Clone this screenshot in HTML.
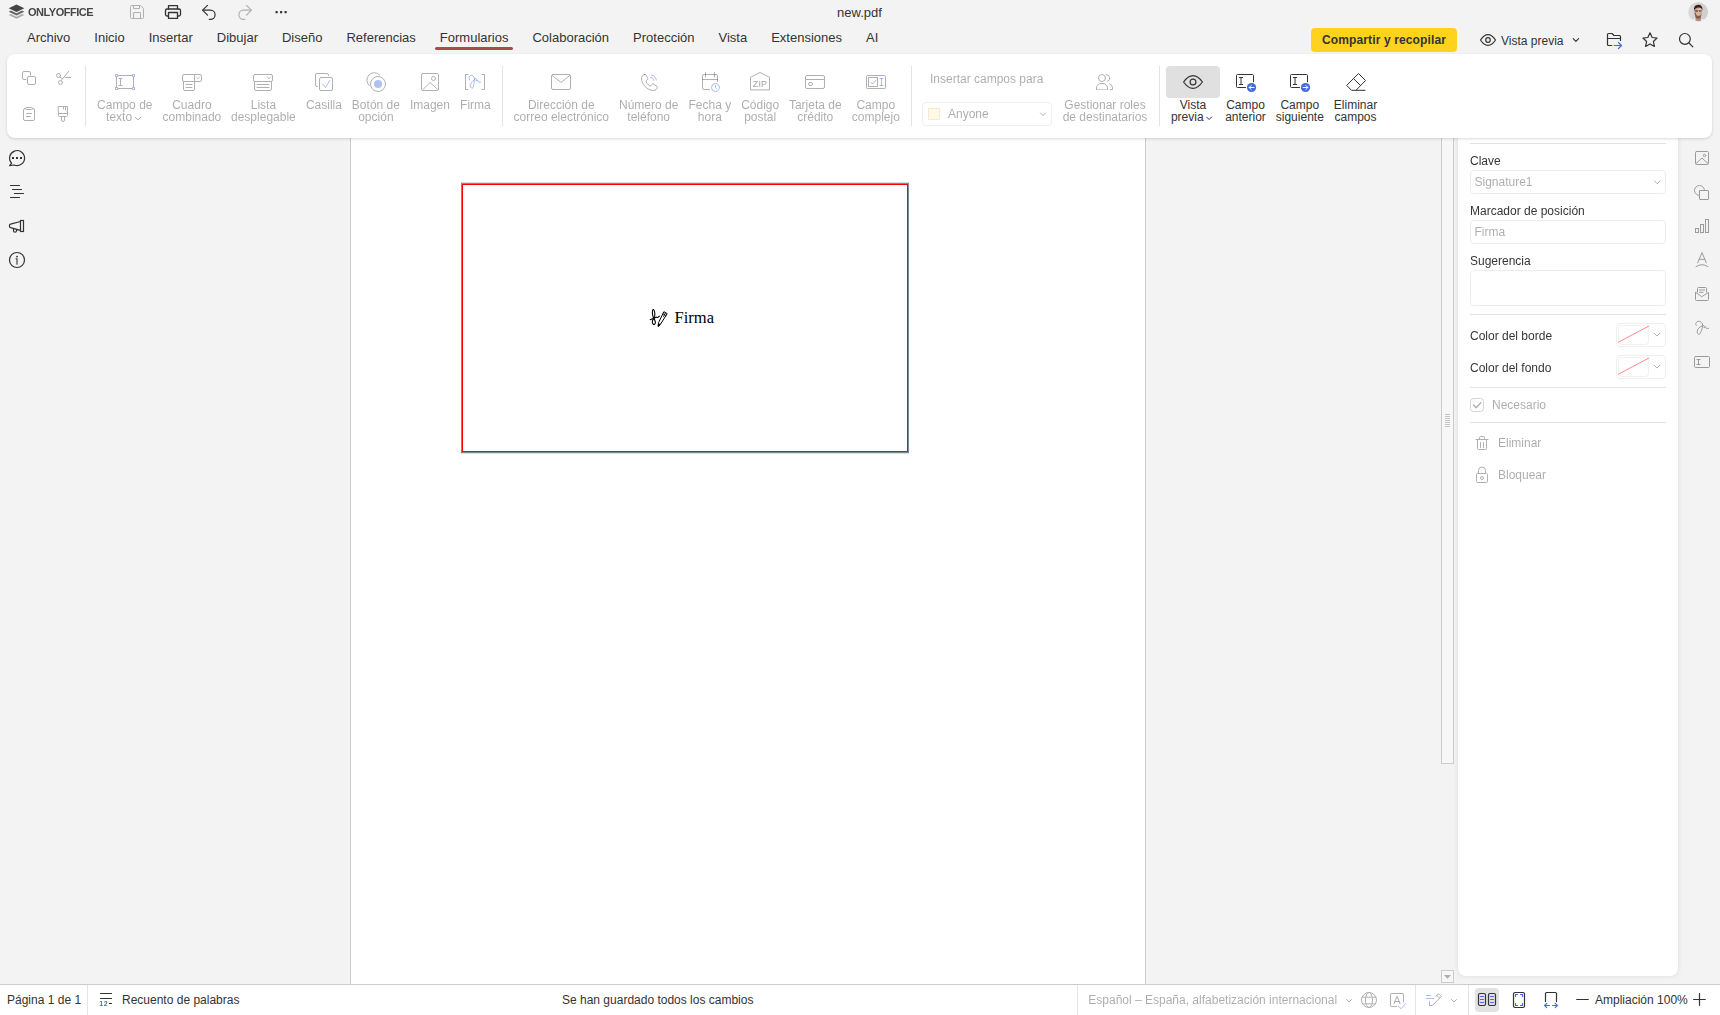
<!DOCTYPE html>
<html lang="es">
<head>
<meta charset="utf-8">
<title>new.pdf</title>
<style>
*{box-sizing:border-box;margin:0;padding:0}
html,body{width:1720px;height:1015px;overflow:hidden}
body{background:#f3f3f3;font-family:"Liberation Sans",Arial,sans-serif;font-size:12px;color:#333;position:relative}
.abs{position:absolute}
.t,.lbl,.cap,.st,.tab,#share,#tabs{z-index:3}
#ico{z-index:2}
#ico rect:not([rx]){stroke-linejoin:miter}
.t{position:absolute;white-space:nowrap;line-height:14px}
.c{text-align:center;transform:translateX(-50%)}
svg{position:absolute;overflow:visible}
/* title bar */
#title{left:0;top:0;width:1720px;height:24px}
/* tabs */
#tabs{left:15px;top:30px;display:flex;font-size:13px;line-height:16px;color:#333;white-space:nowrap}
#tabs span{padding:0 12px}
#underline{left:435px;top:47px;width:78px;height:3px;background:#a94a4b;border-radius:1.5px}
#share{left:1311px;top:28px;width:146px;height:24px;border-radius:4px;background:#ffd21e;font-weight:bold;color:#333;text-align:center;line-height:24px;font-size:12px;letter-spacing:.13px}
/* toolbar */
#toolbar{left:7px;top:54px;width:1705px;height:84px;background:#fff;border-radius:8px;box-shadow:0 1px 3px rgba(0,0,0,.15)}
.sep{position:absolute;width:1px;background:#e3e3e3;top:66px;height:60px}
.cap{position:absolute;white-space:nowrap;line-height:12px;font-size:12px;text-align:center;transform:translateX(-50%);color:#333;opacity:.4;top:99px}
.cap.on{opacity:1}
/* doc */
#page{left:350px;top:100px;width:796px;height:885px;background:#fff;border-left:1px solid #cbcbcb;border-right:1px solid #cbcbcb}
#sig{left:461px;top:183px;width:448px;height:270px;border:1px solid #7f8c8d}
#sig i{position:absolute;left:0;top:0;right:0;bottom:0;border:1px solid #f00;display:block}
#thumb{left:1441px;top:100px;width:13px;height:664px;background:#f7f7f7;border:1px solid #cbcbcb}
/* right panel */
#rpanel{left:1458px;top:100px;width:220px;height:876px;background:#fff;border-radius:8px;box-shadow:0 0 5px rgba(0,0,0,.11)}
.hr{position:absolute;left:1470px;width:196px;height:1px;background:#e3e3e3}
.lbl{opacity:.99;position:absolute;left:1470px;white-space:nowrap;line-height:14px;color:#333}
.inp{position:absolute;left:1470px;width:196px;height:24px;border:1px solid #ececec;border-radius:4px;opacity:.99;background:#fff;color:rgba(51,51,51,.4);line-height:22px;padding-left:3.5px}
/* status */
#status{left:0;top:984px;width:1720px;height:31px;background:#fff;border-top:1px solid #cbcbcb}
.st{position:absolute;top:993px;white-space:nowrap;line-height:14px;color:#333}
.dis{color:#333;opacity:.4}
</style>
</head>
<body>

<!-- ===== document area ===== -->
<div class="abs" id="page"></div>
<div class="abs" id="sig"><i></i></div>
<div class="abs" style="left:461px;top:182px;width:448px;height:272px;border-top:1px solid rgba(127,140,141,.28);border-bottom:1px solid rgba(127,140,141,.28)"></div>
<span class="t" style="left:674.6px;top:309px;font-family:'Liberation Serif',serif;font-size:16.5px;line-height:18px;color:#000">Firma</span>
<div class="abs" id="thumb"></div>

<!-- ===== right panel ===== -->
<div class="abs" id="rpanel"></div>
<div class="hr" style="top:143px"></div>
<span class="lbl" style="top:154px">Clave</span>
<div class="inp" style="top:170px">Signature1</div>
<span class="lbl" style="top:204px">Marcador de posición</span>
<div class="inp" style="top:220px">Firma</div>
<span class="lbl" style="top:254px">Sugerencia</span>
<div class="inp" style="top:270px;height:36px"></div>
<div class="hr" style="top:314px"></div>
<span class="lbl" style="top:329px">Color del borde</span>
<span class="lbl" style="top:361px">Color del fondo</span>
<div class="hr" style="top:387px"></div>
<span class="lbl dis" style="left:1492px;top:398px">Necesario</span>
<div class="hr" style="top:422px"></div>
<span class="lbl dis" style="left:1498px;top:436px">Eliminar</span>
<span class="lbl dis" style="left:1498px;top:468px">Bloquear</span>

<!-- ===== status bar ===== -->
<div class="abs" id="status"></div>
<span class="st" style="left:7px">Página 1 de 1</span>
<span class="st" style="left:122px">Recuento de palabras</span>
<span class="st" style="left:562px">Se han guardado todos los cambios</span>
<span class="st dis" style="left:1088.3px">Español – España, alfabetización internacional</span>
<span class="st" style="left:1595px">Ampliación 100%</span>

<!-- ===== title bar ===== -->
<span class="t" style="left:28px;top:5px;font-weight:bold;font-size:11px;color:#444;letter-spacing:-.48px;opacity:.99">ONLYOFFICE</span>
<span class="t c" style="left:859.5px;top:5px;font-size:13px;line-height:16px">new.pdf</span>

<!-- ===== tabs ===== -->
<div class="abs" id="tabs"><span>Archivo</span><span>Inicio</span><span>Insertar</span><span>Dibujar</span><span>Diseño</span><span>Referencias</span><span>Formularios</span><span>Colaboración</span><span>Protección</span><span>Vista</span><span>Extensiones</span><span>AI</span></div>
<div class="abs" id="underline"></div>
<div class="abs" id="share">Compartir y recopilar</div>
<span class="t" style="left:1501px;top:34px">Vista previa</span>

<!-- ===== toolbar ===== -->
<div class="abs" id="toolbar"></div>
<div class="sep" style="left:85px"></div>
<div class="sep" style="left:502px"></div>
<div class="sep" style="left:911px"></div>
<div class="sep" style="left:1159px"></div>

<span class="cap" style="left:124.8px">Campo de</span><span class="cap" style="left:106.1px;top:111px;transform:none">texto</span>
<span class="cap" style="left:191.9px">Cuadro<br>combinado</span>
<span class="cap" style="left:263.4px">Lista<br>desplegable</span>
<span class="cap" style="left:323.9px">Casilla</span>
<span class="cap" style="left:375.9px">Botón de<br>opción</span>
<span class="cap" style="left:429.9px">Imagen</span>
<span class="cap" style="left:475.4px">Firma</span>
<span class="cap" style="left:561.3px">Dirección de<br>correo electrónico</span>
<span class="cap" style="left:648.7px">Número de<br>teléfono</span>
<span class="cap" style="left:709.8px">Fecha y<br>hora</span>
<span class="cap" style="left:760.2px">Código<br>postal</span>
<span class="cap" style="left:815.3px">Tarjeta de<br>crédito</span>
<span class="cap" style="left:875.8px">Campo<br>complejo</span>
<span class="t dis" style="left:930px;top:72px">Insertar campos para</span>
<span class="t dis" style="left:948px;top:107px">Anyone</span>
<span class="cap" style="left:1105px">Gestionar roles<br>de destinatarios</span>
<span class="cap on" style="left:1193px">Vista</span><span class="cap on" style="left:1170.9px;top:111px;transform:none">previa</span>
<span class="cap on" style="left:1245.5px">Campo<br>anterior</span>
<span class="cap on" style="left:1299.8px">Campo<br>siguiente</span>
<span class="cap on" style="left:1355.5px">Eliminar<br>campos</span>


<!-- ===== icon overlay ===== -->
<svg id="ico" width="1720" height="1015" viewBox="0 0 1720 1015" style="left:0;top:0;pointer-events:none" fill="none" stroke-linecap="round" stroke-linejoin="round">
<!-- logo -->
<g stroke="none">
 <path d="M16.5 4.6 L24.3 8.3 L16.5 12 L8.7 8.3 Z" fill="#444"/>
 <path d="M10.9 10.6 L8.7 11.7 L16.5 15.4 L24.3 11.7 L22.1 10.6 L16.5 13.3 Z" fill="#666"/>
 <path d="M10.9 14 L8.7 15.1 L16.5 18.8 L24.3 15.1 L22.1 14 L16.5 16.7 Z" fill="#aaa"/>
</g>
<!-- save (disabled) -->
<g stroke="#444" stroke-width="1" opacity=".38">
 <path d="M131.5 5.5 H140.5 L143.5 8.5 V17.5 a1 1 0 0 1 -1 1 H131.5 a1 1 0 0 1 -1 -1 V6.5 a1 1 0 0 1 1 -1 Z"/>
 <path d="M133.5 5.5 V8.5 H139.5 V5.5"/>
 <path d="M133.5 18.5 V12.5 H140.5 V18.5"/>
</g>
<!-- print -->
<g stroke="#333" stroke-width="1.3">
 <path d="M168.5 9 V5.6 H177.5 V9"/>
 <path d="M168.5 16 H167 a1.5 1.5 0 0 1 -1.5 -1.5 V10.5 a1.5 1.5 0 0 1 1.5 -1.5 H179 a1.5 1.5 0 0 1 1.5 1.5 V14.5 a1.5 1.5 0 0 1 -1.5 1.5 H177.5"/>
 <path d="M168.5 12.5 H177.5 V18.4 H168.5 Z"/>
</g>
<!-- undo -->
<g stroke="#333" stroke-width="1.2">
 <path d="M207.5 5.3 L202.6 10.2 L207.5 15.1"/>
 <path d="M203 10.2 H210.5 a4.6 4.6 0 0 1 0 9.2 H209.3"/>
</g>
<!-- redo (disabled) -->
<g stroke="#444" stroke-width="1.2" opacity=".38">
 <path d="M246.5 5.3 L251.4 10.2 L246.5 15.1"/>
 <path d="M251 10.2 H243.5 a4.6 4.6 0 0 0 0 9.2 H244.7"/>
</g>
<!-- more -->
<g fill="#333" stroke="none">
 <rect x="275.5" y="11" width="2.2" height="2.2" rx=".5"/><rect x="280" y="11" width="2.2" height="2.2" rx=".5"/><rect x="284.5" y="11" width="2.2" height="2.2" rx=".5"/>
</g>
<!-- avatar -->
<g stroke="none">
 <defs>
  <clipPath id="av"><ellipse cx="1698.100" cy="12" rx="10" ry="9.700"/></clipPath>
  <filter id="bl" x="-20%" y="-20%" width="140%" height="140%"><feGaussianBlur stdDeviation=".55"/></filter>
  <linearGradient id="sk" x1="0" y1="0" x2="1" y2="1"><stop offset="0" stop-color="#a87a66"/><stop offset=".45" stop-color="#e6c0aa"/><stop offset="1" stop-color="#b78d7a"/></linearGradient>
  <linearGradient id="abg" x1="0" y1="0" x2="1" y2="0"><stop offset="0" stop-color="#dadada"/><stop offset="1" stop-color="#cdcdcd"/></linearGradient>
 </defs>
 <ellipse cx="1698.100" cy="12" rx="10" ry="9.700" fill="url(#abg)"/>
 <g clip-path="url(#av)"><g filter="url(#bl)">
  <ellipse cx="1698" cy="22.300" rx="7.500" ry="3.800" fill="#f4f4f4"/>
  <path d="M1696 15 H1700.800 L1701.300 20.500 Q1698.500 22 1695.300 20.500 Z" fill="#b88c79"/>
  <ellipse cx="1698.200" cy="12" rx="3.900" ry="5.300" fill="url(#sk)"/>
  <path d="M1694.500 13 Q1694.800 18.900 1698.300 18.700 Q1701 18.500 1701.600 14.500 Q1699.500 16.300 1698 16 Q1696 15.500 1695.800 12.500 Z" fill="#5f3e33" opacity=".7"/>
  <ellipse cx="1696.600" cy="11.200" rx="1.500" ry="1" fill="#4a312a" opacity=".6"/><ellipse cx="1700" cy="11.100" rx="1.400" ry=".9" fill="#4a312a" opacity=".5"/>
  <path d="M1694 10.800 Q1693.300 4.700 1698.200 4.700 Q1703 4.700 1702.400 10.500 Q1701.800 8 1700 7.700 Q1697 7.300 1695.600 8.600 Q1694.500 9.500 1694 10.800 Z" fill="#35231f"/>
  <path d="M1694.600 10.600 H1701.800" stroke="#3a2924" stroke-width=".6" opacity=".5"/>
 </g></g>
</g>
<!-- eye (tab bar) -->
<g stroke="#333" stroke-width="1.2">
 <path d="M1480.500 40 Q1484 34.600 1488 34.600 Q1492 34.600 1495.500 40 Q1492 45.400 1488 45.400 Q1484 45.400 1480.500 40 Z"/>
 <circle cx="1488" cy="40" r="2.300"/>
</g>
<path d="M1573.200 38.600 L1575.900 41.300 L1578.600 38.600" stroke="#333" stroke-width="1.100"/>
<!-- folder -->
<g stroke="#333" stroke-width="1.200">
 <path d="M1611.800 45.500 H1608.500 a1 1 0 0 1 -1 -1 V34.500 a1 1 0 0 1 1 -1 H1612 L1614 35.500 H1619.500 a1 1 0 0 1 1 1 V40.500"/>
 <path d="M1607.500 38.500 H1620.500"/>
</g>
<path d="M1614.200 45.500 H1621.500 M1618.500 42.500 L1621.500 45.500 L1618.500 48.500" stroke="#446cd8" stroke-width="1.200"/>
<!-- star -->
<path d="M1650 32.800 L1652.150 37.500 L1657.100 38.050 L1653.400 41.500 L1654.400 46.400 L1650 43.900 L1645.600 46.400 L1646.600 41.500 L1642.900 38.050 L1647.850 37.500 Z" stroke="#333" stroke-width="1.200"/>
<!-- search -->
<g stroke="#333" stroke-width="1.200"><circle cx="1684.900" cy="38.900" r="5.400"/><path d="M1689 43 L1692.800 46.800"/></g>


<!-- copy / cut / paste / painter -->
<g stroke="#444" stroke-width="1" opacity=".42">
 <path d="M26 79.500 H24 a1.500 1.500 0 0 1 -1.500 -1.500 V73 a1.500 1.500 0 0 1 1.500 -1.500 H29 a1.500 1.500 0 0 1 1.500 1.500 V75"/>
 <rect x="27.500" y="76.500" width="8" height="8" rx="1.500"/>
 <circle cx="58.500" cy="75.500" r="2"/><circle cx="60.500" cy="82.500" r="2"/>
 <path d="M68.500 71.500 L61.300 80.500 M60 77 L62.300 78.700 M65.500 77.500 H70.500"/>
 <rect x="23.500" y="108.500" width="11" height="12" rx="1.500"/>
 <rect x="25.500" y="107.500" width="7" height="2" rx="1" fill="#fff"/>
 <path d="M26.500 113.500 H31.500 M26.500 116.500 H30.500"/>
 <path d="M58.500 106.500 H67.500 V115.500 a1 1 0 0 1 -1 1 H59.500 a1 1 0 0 1 -1 -1 Z M58.500 113.500 H67.500 M63.500 106.500 V109 M65.500 106.500 V110"/>
 <path d="M61.500 116.500 V120 a1.500 1.500 0 0 0 3 0 V116.500"/>
</g>
<!-- text field -->
<g stroke="#444" stroke-width="1" opacity=".42"><rect x="116.500" y="75.500" width="17" height="13"/><path d="M120.500 78.500 V85.500 M119 78.500 H122 M119 85.500 H122"/></g>
<g stroke="#a9baec" stroke-width="1" fill="#fff"><rect x="115.500" y="74.500" width="2" height="2"/><rect x="132.500" y="74.500" width="2" height="2"/><rect x="115.500" y="87.500" width="2" height="2"/><rect x="132.500" y="87.500" width="2" height="2"/></g>
<!-- combo box -->
<g stroke="#444" stroke-width="1" opacity=".42"><rect x="182.500" y="74.500" width="19" height="7" rx="1.500"/><path d="M194.500 74.500 V81.500"/>
 <path d="M183.500 81.500 V89 a1.500 1.500 0 0 0 1.500 1.500 H193 a1.500 1.500 0 0 0 1.500 -1.500 V81.500 M186 84.500 H192 M186 87.500 H192"/></g>
<path d="M196.500 77.200 L198 78.700 L199.500 77.200" stroke="#446cd8" stroke-width="1" opacity=".45"/>
<!-- dropdown list -->
<g stroke="#444" stroke-width="1" opacity=".42"><rect x="253.500" y="74.500" width="19" height="7" rx="1.500"/>
 <path d="M254.500 81.500 V89 a1.500 1.500 0 0 0 1.500 1.500 H270 a1.500 1.500 0 0 0 1.500 -1.500 V81.500 M257 84.500 H269 M257 87.500 H269"/>
 <path d="M267.500 77.200 L269 78.700 L270.500 77.200"/></g>
<!-- checkbox -->
<g stroke="#444" stroke-width="1" opacity=".42"><path d="M317.500 86.500 H317 a1.500 1.500 0 0 1 -1.500 -1.500 V75 a1.500 1.500 0 0 1 1.500 -1.500 H327 a1.500 1.500 0 0 1 1.500 1.500 V75.500"/><rect x="319.500" y="77.500" width="13" height="13" rx="1.500"/></g>
<path d="M322.500 84 L325.500 87.500 L329.800 80.300" stroke="#446cd8" stroke-width="1" opacity=".45"/>
<!-- radio -->
<g stroke="#444" stroke-width="1" opacity=".42"><path d="M369.300 85.700 A7.500 7.500 0 1 1 379.700 74.900"/><circle cx="378" cy="84" r="7.500"/></g>
<circle cx="378" cy="84" r="4" fill="#446cd8" opacity=".42" stroke="none"/>
<!-- image -->
<g stroke="#444" stroke-width="1" opacity=".42"><rect x="421.500" y="73.500" width="17" height="17" rx="1.500"/><circle cx="433.500" cy="78.500" r="2"/><path d="M423 89.500 L430 82.500 L437.500 89.200"/></g>
<!-- signature -->
<g stroke="#444" stroke-width="1" opacity=".42"><path d="M468 74.500 H465.500 V89.500 H468 M482 74.500 H484.500 V89.500 H482"/></g>
<path d="M469.65 80.05 C469.56 79.58 468.84 78.01 469.10 77.20 C469.36 76.39 470.45 75.33 471.20 75.20 C471.95 75.07 473.07 75.72 473.60 76.40 C474.13 77.08 474.32 78.22 474.40 79.30 C474.48 80.38 474.28 81.68 474.10 82.90 C473.92 84.12 473.60 85.70 473.30 86.60 C473.00 87.50 472.77 88.22 472.30 88.30 C471.83 88.38 470.82 87.73 470.50 87.10 C470.18 86.47 470.15 85.37 470.40 84.50 C470.65 83.63 471.38 82.68 472.00 81.90 C472.62 81.12 473.43 80.38 474.10 79.80 C474.77 79.22 475.62 78.18 476.00 78.40 C476.38 78.62 476.15 80.82 476.40 81.10 C476.65 81.38 477.14 79.88 477.50 80.05 C477.86 80.22 478.03 81.77 478.55 82.10 C479.07 82.42 480.26 82.02 480.60 82.00" stroke="#446cd8" stroke-width="1" opacity=".45"/>
<!-- email -->
<g stroke="#444" stroke-width="1" opacity=".42"><rect x="551.500" y="74.500" width="19" height="15" rx="1.500"/><path d="M552.300 75.500 L561 82.500 L569.700 75.500"/></g>
<!-- phone -->
<g stroke="#444" stroke-width="1" opacity=".42"><path d="M644.800 74.500 C643 74.500 641.500 76.500 641.500 78.500 C641.500 84.500 647.500 90.500 653.500 90.500 C655.500 90.500 657.300 89 657.300 87.300 C657.300 86.600 656.900 86.200 656.300 85.800 L653.800 84.200 C653 83.700 652.300 83.900 651.800 84.500 L651 85.500 C650.500 86 649.900 86 649.300 85.500 C648 84.500 646.700 83 646.200 82 C645.900 81.400 646 80.900 646.500 80.500 L647.300 79.800 C647.900 79.300 648 78.600 647.600 77.900 L646.200 75.400 C645.900 74.800 645.400 74.500 644.800 74.500 Z"/></g>
<g stroke="#446cd8" stroke-width="1" opacity=".45"><path d="M650.700 77.400 C652.300 77.600 653.500 78.800 653.800 80.400 M651.300 75 C654 75.300 656 77.400 656.300 80"/></g>
<!-- date -->
<g stroke="#444" stroke-width="1" opacity=".42"><path d="M709.500 89.500 H704 a1.500 1.500 0 0 1 -1.500 -1.500 V76 a1.500 1.500 0 0 1 1.500 -1.500 H716 a1.500 1.500 0 0 1 1.500 1.500 V81.500 M702.500 79.500 H717.500 M705.500 72.500 V77 M714.500 72.500 V77"/></g>
<g stroke="#446cd8" stroke-width="1" opacity=".45"><circle cx="715.500" cy="87.500" r="4"/><path d="M715.500 85.200 V87.700 L716.800 89"/></g>
<!-- zip -->
<g stroke="#444" stroke-width="1" opacity=".42"><path d="M750.500 89.500 V77.300 L760 72.500 L769.500 77.300 V89.500 Z" stroke-linejoin="round"/></g>
<text x="760" y="86.600" text-anchor="middle" font-family="Liberation Sans,Arial,sans-serif" font-size="9" fill="#444" opacity=".5" stroke="none" letter-spacing="0.1">ZIP</text>
<!-- credit card -->
<g stroke="#444" stroke-width="1" opacity=".42"><rect x="805.500" y="75.500" width="19" height="13" rx="1.500"/><path d="M805.500 79.500 H824.500"/><rect x="808.500" y="82.500" width="4" height="3" rx="1.500"/></g>
<!-- complex -->
<g stroke="#444" stroke-width="1" opacity=".42"><rect x="866.500" y="75.500" width="19" height="13" rx="1"/><rect x="868.500" y="77.500" width="9" height="9"/></g>
<g stroke="#446cd8" stroke-width="1" opacity=".45"><path d="M870.500 82 L872.500 84 L876 80 M881.500 78.500 V85.500 M880 78.500 H883 M880 85.500 H883"/></g>
<!-- anyone combo -->
<rect x="922.500" y="102.500" width="129" height="23" rx="3.500" stroke="#efefef" fill="#fff"/>
<rect x="928.500" y="108.500" width="11" height="11" fill="#fff8e4" stroke="#f3ead2"/>
<path d="M1040.500 113 L1043 115.500 L1045.500 113" stroke="#444" stroke-width="1" opacity=".42"/>
<!-- users -->
<g stroke="#444" stroke-width="1" opacity=".42"><circle cx="1102" cy="78" r="3.500"/><path d="M1096.500 89.500 V88 a4.500 4.500 0 0 1 4.500 -4.500 H1103 a4.500 4.500 0 0 1 4.500 4.500 V89.500 Z"/>
 <path d="M1106 74.600 A3.500 3.500 0 0 1 1107.400 81.400 M1109.300 83.600 A4.500 4.500 0 0 1 1112.500 88 V89.500 H1110.200"/></g>
<!-- preview (active) -->
<rect x="1166" y="66" width="54" height="32" rx="4" fill="#e0e0e0" stroke="none"/>
<g stroke="#333" stroke-width="1.200"><path d="M1183.600 82 Q1188 75.600 1193 75.600 Q1198 75.600 1202.400 82 Q1198 88.400 1193 88.400 Q1188 88.400 1183.600 82 Z"/><circle cx="1193" cy="82" r="2.900"/></g>
<path d="M1206.700 117.100 L1209.100 119.500 L1211.500 117.100" stroke="#333" stroke-width="1"/>
<path d="M135.200 117.200 L138 119.900 L140.800 117.200" stroke="#444" stroke-width="1" opacity=".42"/>
<!-- prev field -->
<g stroke="#333" stroke-width="1"><path d="M1245.500 87.500 H1237.500 a1 1 0 0 1 -1 -1 V75.500 a1 1 0 0 1 1 -1 H1252.500 a1 1 0 0 1 1 1 V81.800 M1241 77.500 V84.500 M1239.300 77.500 H1242.700 M1239.300 84.500 H1242.700"/></g>
<circle cx="1251.500" cy="87.500" r="4.600" fill="#446cd8" stroke="none"/>
<path d="M1254 87.500 H1249.200 M1251.200 85.500 L1249.200 87.500 L1251.200 89.500" stroke="#fff" stroke-width="1"/>
<!-- next field -->
<g stroke="#333" stroke-width="1"><path d="M1299.500 87.500 H1291.500 a1 1 0 0 1 -1 -1 V75.500 a1 1 0 0 1 1 -1 H1306.500 a1 1 0 0 1 1 1 V81.800 M1295 77.500 V84.500 M1293.300 77.500 H1296.700 M1293.300 84.500 H1296.700"/></g>
<circle cx="1305.500" cy="87.500" r="4.600" fill="#446cd8" stroke="none"/>
<path d="M1303 87.500 H1307.800 M1305.800 85.500 L1307.800 87.500 L1305.800 89.500" stroke="#fff" stroke-width="1"/>
<!-- eraser -->
<g stroke="#333" stroke-width="1" stroke-linejoin="miter"><path d="M1356 90.300 L1365.500 80.500 L1358.500 73.500 L1346.700 85.400 L1351.500 90.300 H1365 M1353.500 78.600 L1360.600 85.600"/></g>


<!-- left sidebar -->
<g stroke="#333" stroke-width="1.200">
 <path d="M11.600 163.200 A7.500 7.500 0 1 1 14.200 165 L9.600 165.700 Z"/>
 <path d="M10.500 185.500 H19.500 M12.500 189.500 H21.500 M14.500 193.500 H23.500 M10.500 197.500 H19.500"/>
 <path d="M20.500 221.500 L10.500 224.200 a1 1 0 0 0 -1 1 V226.600 a1 1 0 0 0 1 1 L20.500 230.300 M13.500 228.600 V230.700 a1.500 1.500 0 0 0 3 0 V229.500"/>
 <rect x="20.500" y="220.500" width="3" height="11"/>
 <circle cx="17" cy="260" r="7.500"/>
 <path d="M16 258.700 H17 V264.300" stroke-width="1.100"/>
</g>
<g fill="#333" stroke="none"><rect x="12" y="157" width="2" height="2"/><rect x="16" y="157" width="2" height="2"/><rect x="20" y="157" width="2" height="2"/><circle cx="17" cy="256.600" r=".9"/></g>
<!-- right strip -->
<g stroke="#444" stroke-width="1" opacity=".5">
 <rect x="1695.500" y="151.500" width="13" height="13" rx="1"/><circle cx="1704.500" cy="155.500" r="1.200"/><path d="M1696.300 163.300 L1702 158 L1707.800 163.300"/>
 <path d="M1699.500 195.500 A5 5 0 1 1 1704.500 190.500"/><rect x="1699.500" y="190.500" width="9" height="9" rx=".5"/>
 <rect x="1695.500" y="228.500" width="3" height="4"/><rect x="1700.500" y="224.500" width="3" height="8"/><rect x="1705.500" y="219.500" width="3" height="13"/>
 <path d="M1697.700 262.800 L1702 252.600 L1706.300 262.800 M1699.200 259.300 H1704.800 M1696 266.600 Q1702 262.600 1708 266.600"/>
 <path d="M1697.500 292 V288.500 a1 1 0 0 1 1 -1 H1705.500 a1 1 0 0 1 1 1 V292 M1695.500 292.500 V299.500 a1 1 0 0 0 1 1 H1707.500 a1 1 0 0 0 1 -1 V292.500 L1702 296.500 Z M1699.500 290 H1704.500 M1699.500 292.300 H1703"/>
 <path d="M1696.30 325.30 C1696.22 324.92 1695.35 323.68 1695.80 323.00 C1696.25 322.32 1697.93 321.12 1699.00 321.20 C1700.07 321.28 1701.62 322.53 1702.20 323.50 C1702.78 324.47 1702.70 325.67 1702.50 327.00 C1702.30 328.33 1701.53 330.27 1701.00 331.50 C1700.47 332.73 1699.92 334.15 1699.30 334.40 C1698.68 334.65 1697.58 333.73 1697.30 333.00 C1697.02 332.27 1697.15 331.00 1697.60 330.00 C1698.05 329.00 1698.97 327.75 1700.00 327.00 C1701.03 326.25 1703.08 325.33 1703.80 325.50 C1704.52 325.67 1704.02 327.83 1704.30 328.00 C1704.58 328.17 1705.13 326.42 1705.50 326.50 C1705.87 326.58 1706.00 328.20 1706.50 328.50 C1707.00 328.80 1708.17 328.33 1708.50 328.30"/>
 <rect x="1694.500" y="356.500" width="15" height="11" rx="1"/><path d="M1698.500 359.500 V364.500 M1697 359.500 H1700 M1697 364.500 H1700"/>
</g>


<!-- right panel widgets -->
<path d="M1654.500 181 L1657.250 183.750 L1660 181" stroke="#444" stroke-width="1" opacity=".42"/>
<g>
 <rect x="1616.500" y="323.500" width="49" height="23" rx="3.500" stroke="#efefef" fill="#fff"/>
 <rect x="1618.500" y="325.500" width="30" height="19" rx="3" stroke="#f0f0f0" fill="#fff"/>
 <path d="M1618.400 342.200 L1648.800 326.100" stroke="#ff8a8a" stroke-width="1"/>
 <path d="M1654.300 333.300 L1657 336 L1659.700 333.300" stroke="#444" stroke-width="1" opacity=".42"/>
 <rect x="1616.500" y="355.500" width="49" height="23" rx="3.500" stroke="#efefef" fill="#fff"/>
 <rect x="1618.500" y="357.500" width="30" height="19" rx="3" stroke="#f0f0f0" fill="#fff"/>
 <path d="M1618.400 374.200 L1648.800 358.100" stroke="#ff8a8a" stroke-width="1"/>
 <path d="M1654.300 365.300 L1657 368 L1659.700 365.300" stroke="#444" stroke-width="1" opacity=".42"/>
</g>
<rect x="1470.500" y="398.500" width="13" height="13" rx="3" stroke="#d4d4d4" fill="#fff"/>
<path d="M1473.500 405 L1476.200 407.700 L1480.800 402.700" stroke="#444" stroke-width="1.500" opacity=".42"/>
<g stroke="#444" stroke-width="1" opacity=".42">
 <path d="M1476 439.500 H1488 M1479.500 439.500 V437.500 a1 1 0 0 1 1 -1 H1483.500 a1 1 0 0 1 1 1 V439.500 M1477.500 439.500 V448.500 a1 1 0 0 0 1 1 H1485.500 a1 1 0 0 0 1 -1 V439.500 M1480.500 442.500 V447.500 M1483.500 442.500 V447.500"/>
 <rect x="1476.500" y="473.500" width="11" height="9" rx="1"/><path d="M1478.500 473.500 V470.500 a3.500 3.500 0 0 1 7 0 V473.500"/><circle cx="1482" cy="478" r="1.500"/>
</g>
<!-- splitter handle -->
<g stroke="#c4c4c4" stroke-width="1" stroke-linecap="butt"><path d="M1445 414.500 H1450 M1445 416.500 H1450 M1445 418.500 H1450 M1445 420.500 H1450 M1445 422.500 H1450 M1445 424.500 H1450 M1445 426.500 H1450"/></g>


<!-- status bar icons -->
<g stroke-linecap="butt"><path d="M87.500 985 V1015 M1077.500 985 V1015 M1415.500 985 V1015 M1468.500 985 V1015" stroke="#e4e4e4"/></g>
<path d="M100.500 993.500 H111.500 M100.500 998.500 H111.500 M109.300 1003.500 H111.500" stroke="#333" stroke-width="1.200"/>
<text x="99.300" y="1006" font-family="Liberation Sans,Arial,sans-serif" font-weight="bold" font-size="7" fill="#446cd8" stroke="none" letter-spacing=".5" opacity=".99">12</text>
<path d="M1346.500 999.500 L1349 1002 L1351.500 999.500" stroke="#444" stroke-width="1" opacity=".42"/>
<g stroke="#444" stroke-width="1" opacity=".42"><circle cx="1369" cy="1000" r="7.500"/><ellipse cx="1369" cy="1000" rx="3.500" ry="7.500"/><path d="M1362.200 997.200 H1375.800 M1362.500 1003.900 H1375.500"/></g>
<g stroke="#444" stroke-width="1" opacity=".42"><path d="M1396.800 1006.500 H1391.500 a1 1 0 0 1 -1 -1 V994.500 a1 1 0 0 1 1 -1 H1402.500 a1 1 0 0 1 1 1 V1002 M1394 1003.700 L1397 996.300 L1400 1003.700 M1395 1001.500 H1399"/></g>
<path d="M1398.300 1006.200 L1401 1008.700 L1405.800 1003.300" stroke="#446cd8" stroke-width="1" opacity=".45"/>
<path d="M1426.300 995.500 H1430.800 M1426.300 998.500 H1433.800" stroke="#446cd8" stroke-width="1" opacity=".45"/>
<g stroke="#444" stroke-width="1" opacity=".42"><path d="M1429.500 1001.800 V1005.500 H1432.300 L1441.300 996.500 L1438.500 993.700 L1435.700 996.500 M1436.800 995.400 L1439.600 998.200" stroke-linejoin="miter"/></g>
<path d="M1451.500 999.500 L1454 1002 L1456.500 999.500" stroke="#444" stroke-width="1" opacity=".42"/>
<rect x="1475" y="988" width="24" height="24" rx="4" fill="#e2e2e2" stroke="none"/>
<g stroke="#333" stroke-width="1.200"><rect x="1478.500" y="993.500" width="7" height="12" rx="1.500"/><rect x="1488.500" y="993.500" width="7" height="12" rx="1.500"/>
 <rect x="1513.500" y="992.500" width="11" height="15" rx="1.500"/>
 <path d="M1545.500 1001.600 V993.500 a1 1 0 0 1 1 -1 H1555.500 a1 1 0 0 1 1 1 V1001.600"/>
 <path d="M1576.700 999.500 H1588.300 M1693.600 999.500 H1705.300 M1699.500 993.600 V1005.300"/></g>
<g stroke="#446cd8" stroke-width="1.100"><path d="M1480.500 996.500 H1483.500 M1480.500 999.500 H1483.500 M1480.500 1002.500 H1483.500 M1490.500 996.500 H1493.500 M1490.500 999.500 H1493.500 M1490.500 1002.500 H1493.500"/>
 <path d="M1515.500 997 V994.500 H1518 M1520 994.500 H1522.500 V997 M1515.500 1003 V1005.500 H1518 M1520 1005.500 H1522.500 V1003" stroke-linejoin="miter" stroke-linecap="butt"/>
 <path d="M1549.500 1005.500 H1544.700 M1546.800 1003.300 L1544.600 1005.500 L1546.800 1007.700 M1552.500 1005.500 H1557.300 M1555.200 1003.300 L1557.400 1005.500 L1555.200 1007.700"/></g>
<!-- scroll down button -->
<rect x="1441.500" y="970.500" width="12" height="12" fill="#f7f7f7" stroke="#cbcbcb"/>
<path d="M1444 975 H1451 L1447.500 978.800 Z" fill="#adadad" stroke="none"/>


<!-- signature pen glyph -->
<g stroke="#000" stroke-width="1.1">
 <path d="M654.60 317.50 C654.63 316.83 654.87 314.65 654.80 313.50 C654.73 312.35 654.47 311.27 654.20 310.60 C653.93 309.93 653.48 309.43 653.20 309.50 C652.92 309.57 652.62 310.25 652.50 311.00 C652.38 311.75 652.37 312.92 652.50 314.00 C652.63 315.08 652.92 316.45 653.30 317.50 C653.68 318.55 654.45 319.43 654.80 320.30 C655.15 321.17 655.50 321.98 655.40 322.70 C655.30 323.42 654.65 324.45 654.20 324.60 C653.75 324.75 653.00 324.15 652.70 323.60 C652.40 323.05 652.30 322.07 652.40 321.30 C652.50 320.53 652.93 319.63 653.30 319.00 C653.67 318.37 654.38 317.75 654.60 317.50"/>
 <path d="M650.20 319.70 C650.63 319.55 651.97 319.12 652.80 318.80 C653.63 318.48 654.60 318.08 655.20 317.80 C655.80 317.52 656.07 317.15 656.40 317.10 C656.73 317.05 656.92 317.48 657.20 317.50 C657.48 317.52 657.73 317.42 658.10 317.20 C658.47 316.98 659.18 316.37 659.40 316.20"/>
 <path d="M664.2 311.900 L667.200 313.700 L660.600 324 L658.200 326.200 L658.600 322.800 Z" stroke-width="1"/>
 <path d="M663 313.800 L666 315.600 M658.200 326.200 L658.500 323.600 L660 324.500 Z M665.400 313 L663.600 316.500" stroke-width=".9" fill="#000"/>
</g>

</svg>
</body>
</html>
